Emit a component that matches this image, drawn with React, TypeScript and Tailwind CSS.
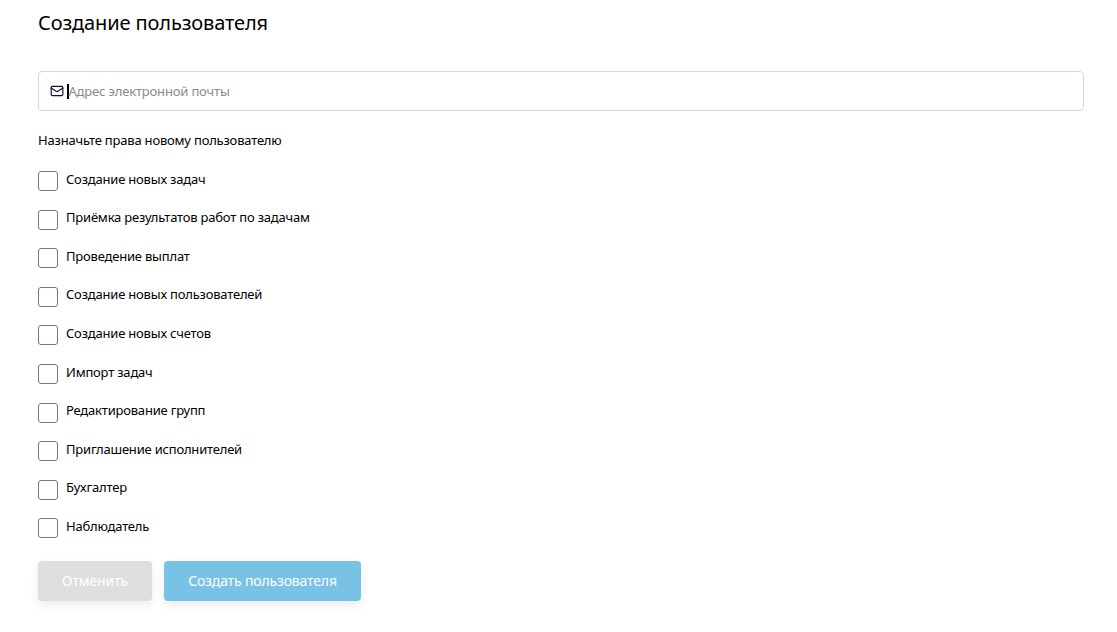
import { Mail } from 'lucide-react'

const rights = [
  'Создание новых задач',
  'Приёмка результатов работ по задачам',
  'Проведение выплат',
  'Создание новых пользователей',
  'Создание новых счетов',
  'Импорт задач',
  'Редактирование групп',
  'Приглашение исполнителей',
  'Бухгалтер',
  'Наблюдатель',
]

export default function App() {
  return (
    <section className="h-[632px] w-[1117px] overflow-hidden bg-white pl-[38px] pr-[33px] pt-[9px] font-['Noto_Sans',sans-serif] text-black">
      <h1 className="text-[20px] leading-[28px] tracking-[-0.12px]">Создание пользователя</h1>

      <div className="mt-[34px] flex h-[40px] items-center rounded-[4px] border border-[#cfd8e0] pl-[11px]">
        <Mail className="h-[14px] w-[14px] text-[#1d0a30]" strokeWidth={2} />
        <span className="ml-[3px] h-[15px] w-[1.5px] bg-black" />
        <span className="pb-[1px] text-[13px] leading-[18px] tracking-[-0.17px] text-[#8a8a8a]">Адрес электронной почты</span>
      </div>

      <p className="mt-[20px] text-[13px] leading-[18px] tracking-[-0.2px]">Назначьте права новому пользователю</p>

      <div className="mt-[22px] flex flex-col gap-[18.6px]">
        {rights.map((right) => (
          <label key={right} className="flex h-[20px] items-start gap-2">
            <span className="h-[20px] w-[20px] shrink-0 rounded-[3px] border border-[#767676]" />
            <span className="-mt-[0.4px] text-[13px] leading-[16px] tracking-[-0.2px]">{right}</span>
          </label>
        ))}
      </div>

      <div className="mt-[23px] flex gap-3">
        <button className="h-[40px] w-[114px] rounded-[4px] bg-[#dedede] pb-[2px] text-[14px] tracking-[-0.1px] text-white shadow-[0_4px_10px_rgba(0,0,0,0.08)]">
          Отменить
        </button>
        <button className="h-[40px] w-[197px] rounded-[4px] bg-[#78c2e6] pb-[2px] text-[14px] tracking-[-0.15px] text-white shadow-[0_4px_10px_rgba(0,0,0,0.08)]">
          Создать пользователя
        </button>
      </div>
    </section>
  )
}
